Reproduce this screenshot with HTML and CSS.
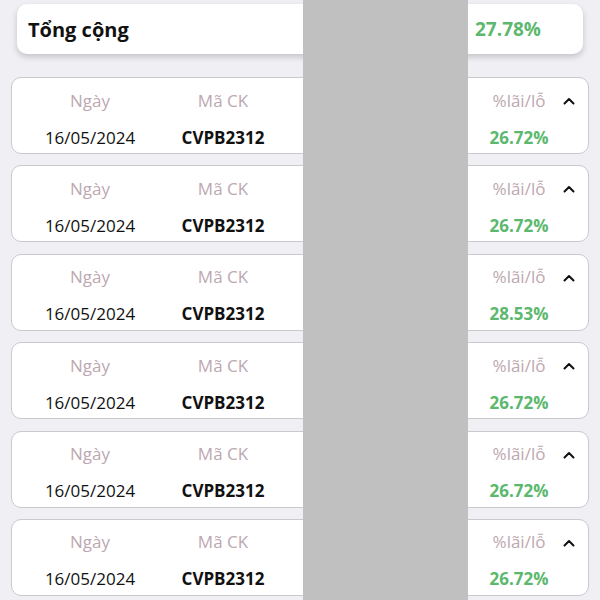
FILE: index.html
```html
<!DOCTYPE html>
<html lang="vi">
<head>
    <meta charset="UTF-8">
    <meta name="viewport" content="width=device-width, initial-scale=1.0">
    <title>Lãi/lỗ</title>
    <link rel="stylesheet" href="styles.css">
</head>
<body>
    <div class="page">
        <div class="total-card">
            <span class="total-label">Tổng cộng</span>
            <span class="total-value">27.78%</span>
        </div>

        <div class="list">
            <div class="item">
                <div class="row head">
                    <span class="col c-date">Ngày</span>
                    <span class="col c-code">Mã CK</span>
                    <span class="col c-mid"></span>
                    <span class="col c-pct">%lãi/lỗ</span>
                    <span class="col c-toggle"><svg width="12" height="8" viewBox="0 0 12 8"><path d="M1.5 6.5 6 2l4.5 4.5" fill="none" stroke="#111" stroke-width="2" stroke-linecap="round" stroke-linejoin="round"/></svg></span>
                </div>
                <div class="row val">
                    <span class="col c-date">16/05/2024</span>
                    <span class="col c-code">CVPB2312</span>
                    <span class="col c-mid"></span>
                    <span class="col c-pct">26.72%</span>
                    <span class="col c-toggle"></span>
                </div>
            </div>

            <div class="item">
                <div class="row head">
                    <span class="col c-date">Ngày</span>
                    <span class="col c-code">Mã CK</span>
                    <span class="col c-mid"></span>
                    <span class="col c-pct">%lãi/lỗ</span>
                    <span class="col c-toggle"><svg width="12" height="8" viewBox="0 0 12 8"><path d="M1.5 6.5 6 2l4.5 4.5" fill="none" stroke="#111" stroke-width="2" stroke-linecap="round" stroke-linejoin="round"/></svg></span>
                </div>
                <div class="row val">
                    <span class="col c-date">16/05/2024</span>
                    <span class="col c-code">CVPB2312</span>
                    <span class="col c-mid"></span>
                    <span class="col c-pct">26.72%</span>
                    <span class="col c-toggle"></span>
                </div>
            </div>

            <div class="item">
                <div class="row head">
                    <span class="col c-date">Ngày</span>
                    <span class="col c-code">Mã CK</span>
                    <span class="col c-mid"></span>
                    <span class="col c-pct">%lãi/lỗ</span>
                    <span class="col c-toggle"><svg width="12" height="8" viewBox="0 0 12 8"><path d="M1.5 6.5 6 2l4.5 4.5" fill="none" stroke="#111" stroke-width="2" stroke-linecap="round" stroke-linejoin="round"/></svg></span>
                </div>
                <div class="row val">
                    <span class="col c-date">16/05/2024</span>
                    <span class="col c-code">CVPB2312</span>
                    <span class="col c-mid"></span>
                    <span class="col c-pct">28.53%</span>
                    <span class="col c-toggle"></span>
                </div>
            </div>

            <div class="item">
                <div class="row head">
                    <span class="col c-date">Ngày</span>
                    <span class="col c-code">Mã CK</span>
                    <span class="col c-mid"></span>
                    <span class="col c-pct">%lãi/lỗ</span>
                    <span class="col c-toggle"><svg width="12" height="8" viewBox="0 0 12 8"><path d="M1.5 6.5 6 2l4.5 4.5" fill="none" stroke="#111" stroke-width="2" stroke-linecap="round" stroke-linejoin="round"/></svg></span>
                </div>
                <div class="row val">
                    <span class="col c-date">16/05/2024</span>
                    <span class="col c-code">CVPB2312</span>
                    <span class="col c-mid"></span>
                    <span class="col c-pct">26.72%</span>
                    <span class="col c-toggle"></span>
                </div>
            </div>

            <div class="item">
                <div class="row head">
                    <span class="col c-date">Ngày</span>
                    <span class="col c-code">Mã CK</span>
                    <span class="col c-mid"></span>
                    <span class="col c-pct">%lãi/lỗ</span>
                    <span class="col c-toggle"><svg width="12" height="8" viewBox="0 0 12 8"><path d="M1.5 6.5 6 2l4.5 4.5" fill="none" stroke="#111" stroke-width="2" stroke-linecap="round" stroke-linejoin="round"/></svg></span>
                </div>
                <div class="row val">
                    <span class="col c-date">16/05/2024</span>
                    <span class="col c-code">CVPB2312</span>
                    <span class="col c-mid"></span>
                    <span class="col c-pct">26.72%</span>
                    <span class="col c-toggle"></span>
                </div>
            </div>

            <div class="item">
                <div class="row head">
                    <span class="col c-date">Ngày</span>
                    <span class="col c-code">Mã CK</span>
                    <span class="col c-mid"></span>
                    <span class="col c-pct">%lãi/lỗ</span>
                    <span class="col c-toggle"><svg width="12" height="8" viewBox="0 0 12 8"><path d="M1.5 6.5 6 2l4.5 4.5" fill="none" stroke="#111" stroke-width="2" stroke-linecap="round" stroke-linejoin="round"/></svg></span>
                </div>
                <div class="row val">
                    <span class="col c-date">16/05/2024</span>
                    <span class="col c-code">CVPB2312</span>
                    <span class="col c-mid"></span>
                    <span class="col c-pct">26.72%</span>
                    <span class="col c-toggle"></span>
                </div>
            </div>
        </div>

        <!-- hidden column mask -->
        <div class="mask"></div>
    </div>
</body>
</html>
```

FILE: styles.css
```css
html, body {
    margin: 0;
    padding: 0;
    height: 100%;
    overflow: hidden;
}

body {
    font-family: 'Open Sans', 'Noto Sans', sans-serif;
    background-color: #efeff4;
    color: #111;
}

.page {
    position: relative;
    min-height: 100%;
    padding: 4px 11px 0 11px;
    box-sizing: border-box;
}

.total-card {
    display: flex;
    align-items: center;
    justify-content: space-between;
    height: 50px;
    margin: 0 6px;
    padding: 0 42px 0 11px;
    background: #fff;
    border-radius: 10px;
    box-shadow: 0 3px 6px rgba(0, 0, 0, 0.18);
}

.total-label {
    font-size: 20px;
    font-weight: 700;
    color: #111;
}

.total-value {
    font-size: 19px;
    font-weight: 700;
    color: #5cb86e;
}

.list {
    display: flex;
    flex-direction: column;
    gap: 11.4px;
    margin-top: 23px;
}

.item {
    background: #fff;
    border: 1px solid #c9c9ce;
    border-radius: 10px;
    padding: 10px 8px 4px 11px;
    display: flex;
    flex-direction: column;
    gap: 13px;
}

.row {
    display: flex;
    align-items: center;
    height: 24px;
    font-size: 17px;
}

.col {
    text-align: center;
    white-space: nowrap;
}

.c-date { width: 134px; }
.c-code { width: 132px; }
.c-mid  { flex: 1; }
.c-pct  { width: 78px; }
.c-toggle {
    width: 22px;
    display: flex;
    justify-content: center;
    align-items: center;
    padding-top: 2px;
}

.head {
    color: #bda8b0;
}

.val .c-code {
    font-weight: 700;
}

.val .c-pct {
    font-weight: 700;
    color: #5cb86e;
}

.mask {
    position: absolute;
    top: 0;
    bottom: 0;
    left: 303px;
    width: 165px;
    background: #c0c0c0;
}
```
